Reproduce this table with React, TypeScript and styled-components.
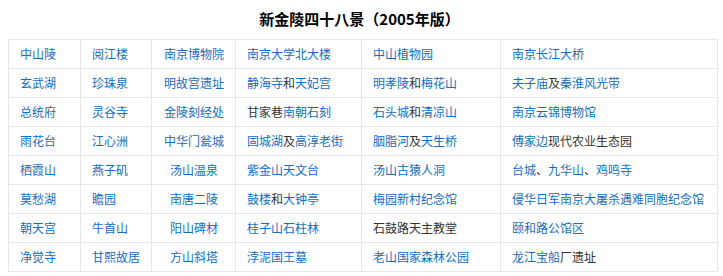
import React from "react";
import styled, { createGlobalStyle } from "styled-components";

const GlobalStyle = createGlobalStyle`
  html, body {
    margin: 0;
    padding: 0;
    background: #ffffff;
  }
  body {
    padding: 8px;
    font-family: "Noto Sans CJK SC", "Liberation Sans", sans-serif;
  }
`;

const Wrapper = styled.div`
  width: 709px;
`;

const Title = styled.div`
  height: 22px;
  line-height: 22px;
  margin-bottom: 9px;
  text-align: center;
  font-size: 15px;
  font-weight: bold;
  color: #000000;
  padding-right: 6px;
`;

const Table = styled.table`
  width: 709px;
  border-collapse: collapse;
  table-layout: fixed;
  border: 1px solid #e6e6e6;
`;

const Col = styled.col<{ $w: number }>`
  width: ${(p) => p.$w}px;
`;

const Cell = styled.td<{ $center?: boolean }>`
  border: 1px solid #e6e6e6;
  height: 28px;
  padding: 0 0 0 11px;
  font-size: 12px;
  line-height: 28px;
  white-space: nowrap;
  color: #333333;
  text-align: ${(p) => (p.$center ? "center" : "left")};
  ${(p) => (p.$center ? "padding: 0 0 0 1px;" : "")}
`;

const Link = styled.span`
  color: #136ec2;
`;

const Plain = styled.span`
  color: #333333;
`;

type Seg = [string, boolean];

const L = (t: string): Seg => [t, true];
const P = (t: string): Seg => [t, false];

const rows: Seg[][][] = [
  [[L("中山陵")], [L("阅江楼")], [L("南京博物院")], [L("南京大学北大楼")], [L("中山植物园")], [L("南京长江大桥")]],
  [
    [L("玄武湖")],
    [L("珍珠泉")],
    [L("明故宫遗址")],
    [L("静海寺"), P("和"), L("天妃宫")],
    [L("明孝陵"), P("和"), L("梅花山")],
    [L("夫子庙"), P("及"), L("秦淮风光带")],
  ],
  [
    [L("总统府")],
    [L("灵谷寺")],
    [L("金陵刻经处")],
    [P("甘家巷"), L("南朝石刻")],
    [L("石头城"), P("和"), L("清凉山")],
    [L("南京云锦博物馆")],
  ],
  [
    [L("雨花台")],
    [L("江心洲")],
    [L("中华门瓮城")],
    [L("固城湖"), P("及"), L("高淳老街")],
    [L("胭脂河"), P("及"), L("天生桥")],
    [L("傅家边"), P("现代农业生态园")],
  ],
  [
    [L("栖霞山")],
    [L("燕子矶")],
    [L("汤山温泉")],
    [L("紫金山天文台")],
    [L("汤山古猿人洞")],
    [L("台城"), P("、"), L("九华山"), P("、"), L("鸡鸣寺")],
  ],
  [
    [L("莫愁湖")],
    [L("瞻园")],
    [L("南唐二陵")],
    [L("鼓楼"), P("和"), L("大钟亭")],
    [L("梅园新村纪念馆")],
    [L("侵华日军南京大屠杀遇难同胞纪念馆")],
  ],
  [
    [L("朝天宫")],
    [L("牛首山")],
    [L("阳山碑材")],
    [L("桂子山石柱林")],
    [P("石鼓路天主教堂")],
    [L("颐和路公馆区")],
  ],
  [
    [L("净觉寺")],
    [L("甘熙故居")],
    [L("方山斜塔")],
    [L("浡泥国王墓")],
    [L("老山国家森林公园")],
    [L("龙江宝船"), P("厂遗址")],
  ],
];

const widths = [72, 71, 84, 126, 139, 217];

export default function App() {
  return (
    <>
      <GlobalStyle />
      <Wrapper>
        <Title>新金陵四十八景（2005年版）</Title>
        <Table>
          <colgroup>
            {widths.map((w, i) => (
              <Col key={i} $w={w} />
            ))}
          </colgroup>
          <tbody>
            {rows.map((row, ri) => (
              <tr key={ri}>
                {row.map((cell, ci) => (
                  <Cell key={ci} $center={ci === 2}>
                    {cell.map(([t, link], si) =>
                      link ? <Link key={si}>{t}</Link> : <Plain key={si}>{t}</Plain>
                    )}
                  </Cell>
                ))}
              </tr>
            ))}
          </tbody>
        </Table>
      </Wrapper>
    </>
  );
}
